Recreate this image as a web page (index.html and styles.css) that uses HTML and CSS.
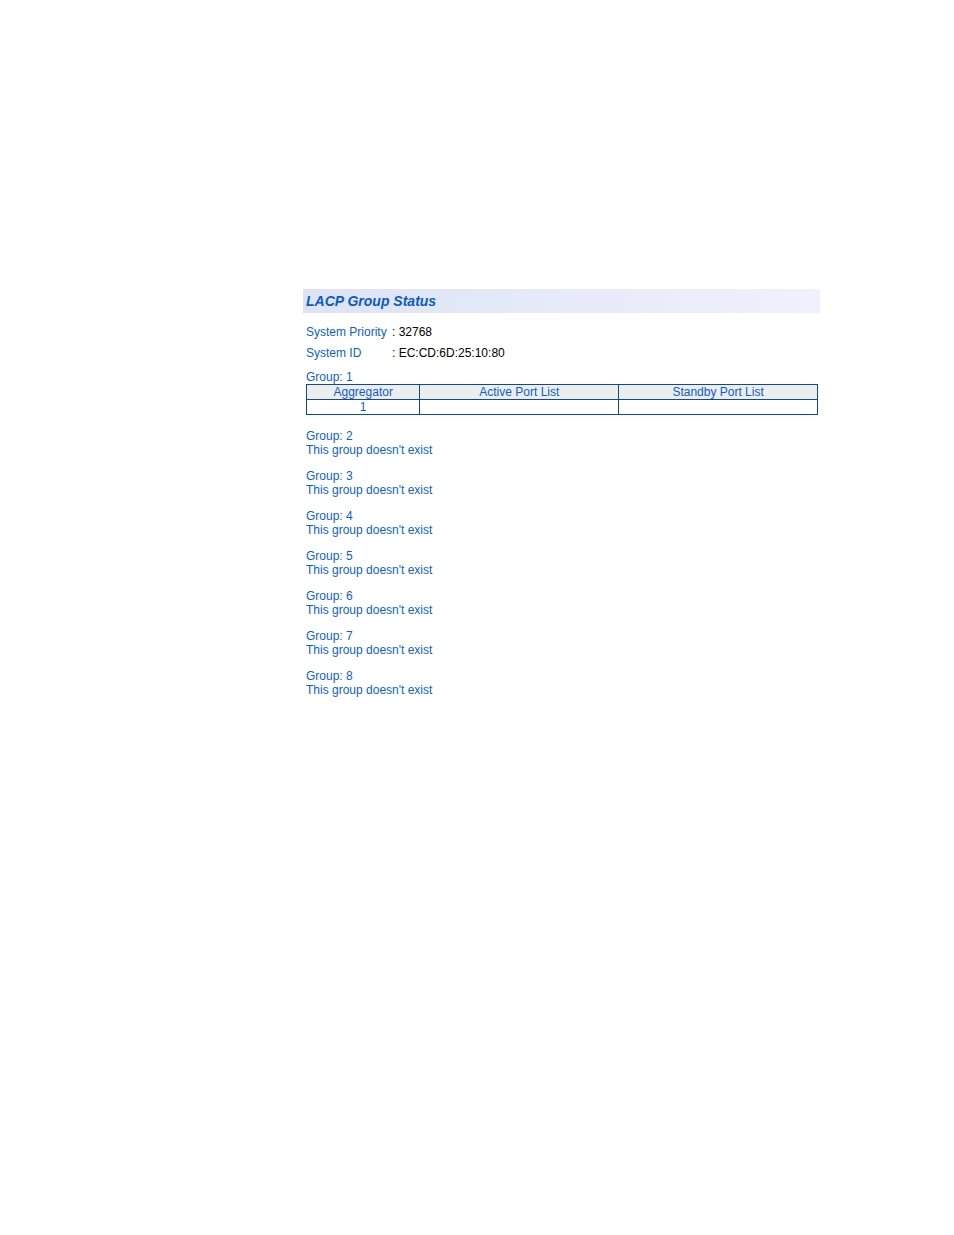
FILE: index.html
```html
<!DOCTYPE html>
<html lang="en">

<head>
    <meta charset="UTF-8">
    <meta name="viewport" content="width=device-width, initial-scale=1.0">
    <title>LACP Group Status</title>
    <link rel="stylesheet" href="styles.css">
</head>

<body>
    <main id="wrap">
        <h1>LACP Group Status</h1>
        <div id="content">
            <dl class="system">
                <dt>System Priority</dt>
                <dd>: 32768</dd>
                <dt>System ID</dt>
                <dd>: EC:CD:6D:25:10:80</dd>
            </dl>
            <div class="group">
                <div>Group: 1</div>
                <table>
                    <tr>
                        <th class="aggregator">Aggregator</th>
                        <th>Active Port List</th>
                        <th>Standby Port List</th>
                    </tr>
                    <tr>
                        <td>1</td>
                        <td></td>
                        <td></td>
                    </tr>
                </table>
            </div>
            <div class="group">
                <div>Group: 2</div>
                <div>This group doesn't exist</div>
            </div>
            <div class="group">
                <div>Group: 3</div>
                <div>This group doesn't exist</div>
            </div>
            <div class="group">
                <div>Group: 4</div>
                <div>This group doesn't exist</div>
            </div>
            <div class="group">
                <div>Group: 5</div>
                <div>This group doesn't exist</div>
            </div>
            <div class="group">
                <div>Group: 6</div>
                <div>This group doesn't exist</div>
            </div>
            <div class="group">
                <div>Group: 7</div>
                <div>This group doesn't exist</div>
            </div>
            <div class="group">
                <div>Group: 8</div>
                <div>This group doesn't exist</div>
            </div>
        </div>
    </main>
</body>

</html>
```
FILE: styles.css
```css
body {
    margin: 0;
    background-color: white;
    color: #0a5fd0;
    font-family: Arial, "Liberation Sans", sans-serif;
    font-size: 12px;
    line-height: 14px;
}

#wrap {
    padding: 289px 134px 40px 303px;
}

h1 {
    margin: 0;
    padding-left: 3px;
    background: linear-gradient(to right, #dde3f5, #e8ecfa 60%, #eff2fc);
    color: #0a5cc4;
    font-size: 14px;
    font-style: italic;
    line-height: 24px;
}

#content {
    padding: 9px 2px 0 3px;
}

.system {
    display: grid;
    grid-template-columns: 86px 1fr;
    margin: 0 0 6px;
    line-height: 21px;
}

.system dd {
    margin: 0;
    color: black;
}

.group {
    margin-bottom: 12px;
}

table {
    width: 100%;
    margin-bottom: 14px;
    table-layout: fixed;
    border-collapse: collapse;
}

th, td {
    height: 14px;
    padding: 0;
    border: 1px solid #0a4c94;
    font-weight: normal;
    text-align: center;
}

th {
    background-color: #ededed;
}

.aggregator {
    width: 22%;
}
```
